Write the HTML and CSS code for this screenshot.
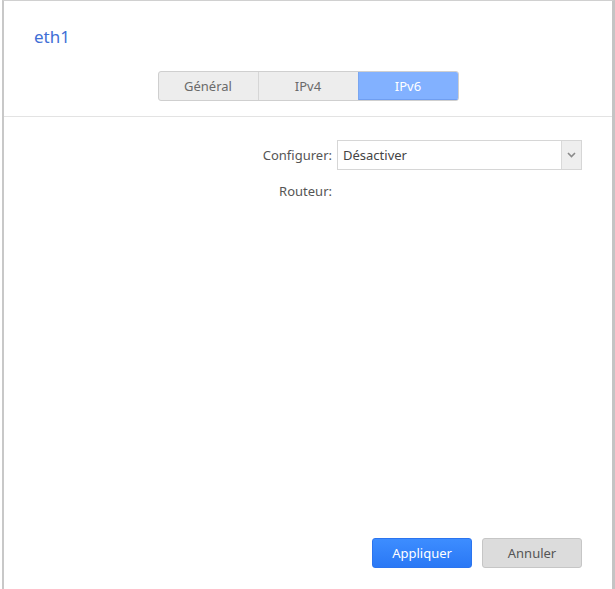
FILE: index.html
```html
<!DOCTYPE html>
<html lang="fr">
<head>
<meta charset="utf-8">
<title>eth1</title>
<link rel="stylesheet" href="styles.css">
</head>
<body>
<div class="frame">
  <div class="dialog">
    <header class="head">
      <h1 class="title">eth1</h1>
      <nav class="tabs">
        <span class="tab">Général</span>
        <span class="tab">IPv4</span>
        <span class="tab active">IPv6</span>
      </nav>
    </header>
    <div class="divider"></div>
    <form class="form">
      <label class="label">Configurer:</label>
      <div class="select">
        <span class="select-value">Désactiver</span>
        <span class="select-arrow">
          <svg width="9" height="6" viewBox="0 0 9 6"><path d="M1 1 L4.5 4.5 L8 1" fill="none" stroke="#8a8a8a" stroke-width="1.6"/></svg>
        </span>
      </div>
      <label class="label">Routeur:</label>
      <div class="value"></div>
    </form>
    <footer class="foot">
      <button class="btn primary" type="button">Appliquer</button>
      <button class="btn" type="button">Annuler</button>
    </footer>
  </div>
</div>
</body>
</html>
```
FILE: styles.css
```css
html, body {
  margin: 0;
  padding: 0;
  background: #ffffff;
}
body {
  font-family: "Noto Sans", "DejaVu Sans", sans-serif;
  font-size: 13px;
  color: #505050;
}
.frame {
  width: 615px;
  height: 589px;
  box-sizing: border-box;
  padding-left: 2px;
}
.dialog {
  height: 589px;
  width: 613px;
  box-sizing: border-box;
  border-left: 2px solid #c8c8c8;
  border-right: 3px solid #c4c4c4;
  border-top: 1px solid #d0d0d0;
  display: flex;
  flex-direction: column;
}
.head {
  display: flex;
  flex-direction: column;
}
.title {
  margin: 24px 0 0 30px;
  font-size: 17px;
  font-weight: normal;
  color: #3f6fd6;
  line-height: 24px;
  height: 24px;
}
.tabs {
  align-self: center;
  margin-top: 22px;
  display: flex;
  height: 30px;
  box-sizing: border-box;
  border: 1px solid #cfcfcf;
  border-radius: 3px;
  background: #ededed;
  overflow: hidden;
}
.tab {
  width: 99px;
  display: flex;
  align-items: center;
  justify-content: center;
  color: #6a6a6a;
  font-size: 13px;
  border-left: 1px solid #d6d6d6;
}
.tab:first-child {
  border-left: none;
}
.tab.active {
  background: #82b1ff;
  color: #ffffff;
  border-left: 1px solid #7aa6f0;
  box-shadow: inset 0 -1px 0 #6f9ef0;
}
.divider {
  margin-top: 15px;
  height: 1px;
  background: #e3e3e3;
}
.form {
  margin-top: 23px;
  display: grid;
  grid-template-columns: 1fr 245px;
  column-gap: 5px;
  row-gap: 6px;
  padding-right: 30px;
  align-items: center;
}
.label {
  text-align: right;
  color: #555555;
}
.select {
  height: 30px;
  box-sizing: border-box;
  border: 1px solid #d6d6d6;
  display: flex;
  align-items: stretch;
  background: #fff;
}
.select-value {
  flex: 1;
  display: flex;
  align-items: center;
  padding-left: 5px;
  color: #444;
}
.select-arrow {
  width: 19px;
  display: flex;
  align-items: center;
  justify-content: center;
  background: #eeeeee;
  border-left: 1px solid #d9d9d9;
}
.value {
  height: 30px;
}
.foot {
  margin-top: auto;
  padding: 0 30px 21px 0;
  display: flex;
  justify-content: flex-end;
  gap: 10px;
}
.btn {
  width: 100px;
  height: 30px;
  box-sizing: border-box;
  border: 1px solid #c6c6c6;
  border-radius: 3px;
  background: #dcdcdc;
  color: #555;
  font-family: inherit;
  font-size: 13px;
  padding: 0;
}
.btn.primary {
  background: linear-gradient(#3d8dff, #2a78f5);
  border-color: #2b74ef;
  color: #ffffff;
}
```
